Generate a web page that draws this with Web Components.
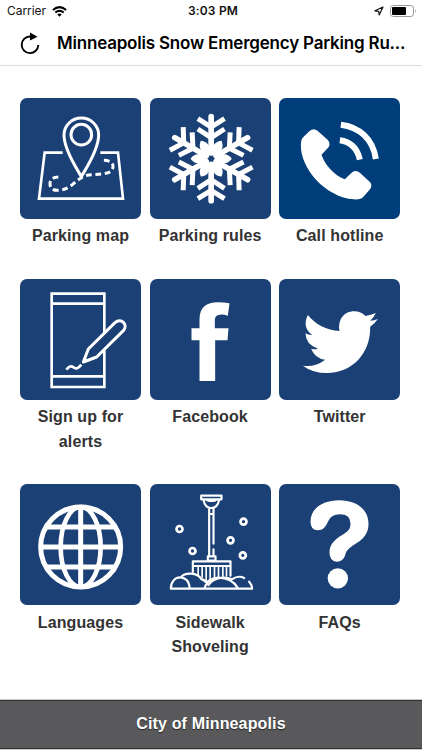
<!DOCTYPE html>
<html lang="en">
<head>
<meta charset="utf-8">
<title>Minneapolis Snow Emergency Parking Rules</title>
<style>
html,body{margin:0;height:100%;background:#fff}
body{overflow:hidden}
</style>
</head>
<body>
<snow-app>
  <status-bar slot="top"></status-bar>
  <nav-bar slot="top">Minneapolis Snow Emergency Parking Ru...</nav-bar>

  <icon-tile label="Parking map">
    <svg viewBox="30 23 363 363" fill="none" stroke="#fff" stroke-width="8">
      <path d="M158 187H104L87 325H339L324 187H271"/>
      <path d="M214 259C202 237 162 180 162 134A52 51 0 0 1 266 134C266 180 226 237 214 259Z" stroke-width="9"/>
      <circle cx="214" cy="133" r="31" stroke-width="9"/>
      <path d="M145 260Q119 261 120 282Q121 300 143 300Q168 299 187 283Q205 267 218 260Q229 253 246 253C276 251 309 252 309 228Q309 210 279 210" stroke-width="9" stroke-dasharray="17 11"/>
    </svg>
  </icon-tile>
  <icon-tile label="Parking rules">
    <svg viewBox="28.500 23 363 363" fill="none" stroke="#fff" stroke-width="17">
      <defs><g id="arm">
        <path d="M212 188V79" stroke-linecap="round"/>
        <path d="M172 85L212 110L252 85M172 116L212 142L252 116" stroke-width="15"/>
        <path d="M204 182C194 165 199 153 212 143C225 153 230 165 220 182Z" transform="rotate(30 212 205)" fill="#fff" stroke="none"/>
      </g></defs>
      <use href="#arm"/><use href="#arm" transform="rotate(60 212 205)"/><use href="#arm" transform="rotate(120 212 205)"/>
      <use href="#arm" transform="rotate(180 212 205)"/><use href="#arm" transform="rotate(240 212 205)"/><use href="#arm" transform="rotate(300 212 205)"/>
      <circle cx="212" cy="205" r="21" stroke-width="18"/>
    </svg>
  </icon-tile>
  <icon-tile label="Call hotline" style="--tile:#003e7b">
    <svg viewBox="28.500 23 363 363" fill="#fff">
      <path d="M98 144L121 121Q132 112 144 121L175 149Q184 160 177 171L156 193C166 223 193 254 226 267L248 246Q260 238 271 247L302 276Q309 285 302 296L282 319Q273 329 253 327C169 321 93 236 94 164Q94 151 98 144Z"/>
      <path d="M214 103C269 109 311 147 319 206M211 150C242 154 263 173 271 208" fill="none" stroke="#fff" stroke-width="18"/>
    </svg>
  </icon-tile>

  <icon-tile label="Sign up for alerts">
    <svg viewBox="30 26 363 363" fill="none" stroke="#fff" stroke-width="8">
      <path d="M283 190V70H125V350H283V240M125 100H283M125 318H283"/>
      <path d="M220 275L235 236L315 157C333 141 356 163 340 181L260 260Z" stroke-width="9" stroke-linejoin="round" fill="#1b4075"/>
      <path d="M218 278L223 260L235 271Z" fill="#fff" stroke="none"/>
      <path d="M169 298Q181 283 190 291Q201 300 214 283" stroke-width="8"/>
    </svg>
  </icon-tile>
  <icon-tile label="Facebook">
    <svg viewBox="28.500 26 363 363" fill="#fff">
      <path d="M177 332V210H153V174H177V148C177 110 198 96 232 96Q251 96 267 99L262 136Q249 132 238 133Q223 134 223 149V174H264L261 210H224V332Z"/>
    </svg>
  </icon-tile>
  <icon-tile label="Twitter">
    <svg viewBox="28.500 26 363 363" fill="#fff">
      <path d="M115 134C137 162 171 180 210 182C204 149 223 123 254 123Q275 123 288 137Q304 134 319 128Q313 142 302 151Q314 151 325 146Q316 160 302 169C304 244 253 307 172 308Q129 308 100 286Q137 291 167 268Q136 264 125 235Q136 238 145 235Q108 222 108 189Q118 195 128 194Q97 171 115 134Z"/>
    </svg>
  </icon-tile>

  <icon-tile label="Languages">
    <svg viewBox="30 26 363 363" fill="none" stroke="#fff" stroke-width="15">
      <circle cx="212" cy="215" r="120"/>
      <ellipse cx="212" cy="215" rx="60" ry="120" stroke-width="14"/>
      <path d="M212 95V335M92 215H332M106 155H318M106 275H318"/>
    </svg>
  </icon-tile>
  <icon-tile label="Sidewalk Shoveling">
    <svg viewBox="28.500 26 363 363" fill="none" stroke="#fff" stroke-width="6.500" stroke-linejoin="round" stroke-linecap="round">
      <path d="M182 61H243V72H182ZM189 73Q193 98 212 98Q231 98 236 73M198 73Q202 78 212 76Q222 78 227 73M206 98V243M219 98V205M219 222V243M207 116H219M202 243H225V256H202ZM157 290V258H270V301M158 272H270"/>
      <path d="M173 274V298M185 274V306M197 274V321M209 274V320M222 274V313M234 274V307M247 274V303M258 274V302" stroke-width="5"/>
      <path d="M91 340C91 318 105 305 121 306C134 290 171 291 182 311Q196 313 205 328C220 305 256 302 274 312Q294 299 311 308M326 319Q335 329 335 340H91M121 306Q145 309 148 338M182 311Q198 318 204 329M192 338Q200 309 233 307Q275 308 292 338"/>
      <g stroke-width="8"><circle cx="117" cy="161" r="9"/><circle cx="309" cy="139" r="9"/><circle cx="270" cy="195" r="9"/><circle cx="156" cy="227" r="9"/><circle cx="307" cy="240" r="9"/></g>
    </svg>
  </icon-tile>
  <icon-tile label="FAQs">
    <svg viewBox="28.500 26 363 363" fill="#fff">
      <path d="M123 139C123 99 160 75 209 75C259 75 297 101 297 145C297 174 283 190 256 207C235 221 231 225 227 240Q221 259 202 259Q180 257 180 232C180 208 193 194 218 179C236 168 243 161 243 145Q243 117 211 117Q185 117 176 138C169 155 160 165 145 165Q123 164 123 139Z"/>
      <circle cx="205" cy="309" r="30.500"/>
    </svg>
  </icon-tile>

  <site-footer slot="bottom">City of Minneapolis</site-footer>
</snow-app>

<script>
const define = (name, html, setup) => customElements.define(name, class extends HTMLElement {
  connectedCallback() {
    if (this.shadowRoot) return;
    const t = document.createElement('template');
    t.innerHTML = html;
    this.attachShadow({ mode: 'open' }).append(t.content.cloneNode(true));
    if (setup) setup(this, this.shadowRoot);
  }
});

define('snow-app', `
<style>
:host{display:flex;flex-direction:column;width:422px;height:750px;background:#fff;color:#333}
main{flex:1;min-height:0;display:grid;grid-template-columns:repeat(3,121px);column-gap:8.600px;row-gap:35.500px;align-content:start;padding:31.700px 0 0 20px}
</style>
<slot name="top"></slot><main><slot></slot></main><slot name="bottom"></slot>`);

define('status-bar', `
<style>
:host{display:grid;grid-template-columns:1fr auto 1fr;align-items:center;height:22px;padding:0 5px 0 7px;font:12px/22px Inter,sans-serif;color:#111}
.l,.r{display:flex;align-items:center}
.l{gap:6px;letter-spacing:-.05px}.r{justify-content:flex-end;gap:6px}
b{font-weight:600;letter-spacing:.2px;padding-left:2px}
svg{display:block}
</style>
<div class="l"><span>Carrier</span>
<svg width="15" height="11" viewBox="0 0 15 11" fill="none" stroke="#000" stroke-width="2"><path d="M.9 4Q7.500-1.800 14.100 4M3.300 6.600Q7.500 3 11.700 6.600"/><path d="M7.500 10.700L5.300 8.500Q7.500 6.700 9.700 8.500Z" fill="#000" stroke="none"/></svg></div>
<b>3:03 PM</b>
<div class="r"><svg width="10" height="10" viewBox="0 0 10 10" fill="none" stroke="#111" stroke-width="1.200" stroke-linejoin="round"><path d="M9 1L.9 4.800L4.700 5.300L5.200 9Z"/></svg>
<svg width="27" height="12" viewBox="0 0 27 12"><rect x=".5" y=".5" width="23" height="11" rx="2.700" fill="#fff" stroke="#999"/><rect x="2" y="2" width="14" height="8" rx="1" fill="#000"/><path d="M25 4Q26.700 6 25 8Z" fill="#999"/></svg></div>`);

define('nav-bar', `
<style>
:host{display:flex;align-items:center;height:43px;border-bottom:1px solid #dcdcdc;padding-left:20px;gap:17px;font:600 17px/43px Inter,sans-serif;color:#000;white-space:nowrap}
svg{display:block;flex:none}
span{letter-spacing:-.2px}
</style>
<svg width="20" height="24" viewBox="0 0 20 24"><path d="M10 4.500A8.300 8.300 0 1 0 18.300 13" fill="none" stroke="#000" stroke-width="1.900"/><path d="M10 .5V8.500L17.500 4.700Z"/></svg>
<span><slot></slot></span>`);

define('icon-tile', `
<style>
:host{display:flex;flex-direction:column;align-items:center;gap:5.500px;font:bold 16px/24.500px "Liberation Sans",Arial,sans-serif;color:#333;text-align:center}
.box{width:121px;height:121px;border-radius:7px;overflow:hidden;background:var(--tile,#1b4075)}
::slotted(svg){display:block;width:121px;height:121px}
.label{width:110px;letter-spacing:.1px;margin-bottom:-5.500px}
</style>
<div class="box"><slot></slot></div><div class="label"></div>`,
(host, root) => { root.querySelector('.label').textContent = host.getAttribute('label'); });

define('site-footer', `
<style>
:host{display:flex;flex:none;align-items:center;justify-content:center;box-sizing:border-box;height:49px;margin-bottom:1px;padding-bottom:2px;background:#59595b;border-top:1px solid #333;border-bottom:1px solid #333;box-shadow:0 -1px #c9c9c9,0 1px #c9c9c9;font:bold 16px/1 "Liberation Sans",Arial,sans-serif;letter-spacing:.15px;color:#fff;text-shadow:0 1px 1px #222}
</style>
<slot></slot>`);
</script>
</body>
</html>
